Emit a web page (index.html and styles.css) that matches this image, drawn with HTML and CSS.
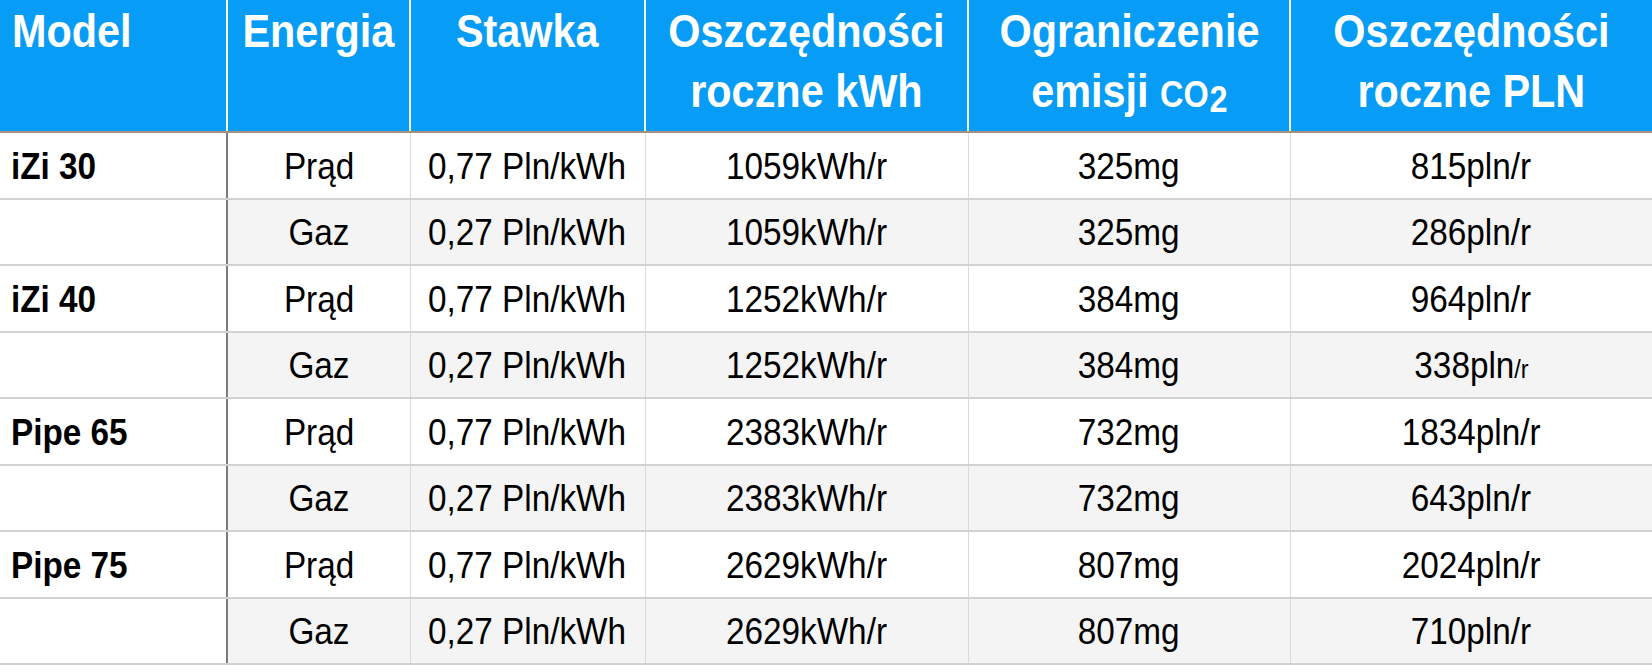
FILE: index.html
```html
<!DOCTYPE html>
<html lang="pl">
<head>
<meta charset="utf-8">
<title>Tabela oszczędności</title>
<link rel="stylesheet" href="styles.css">
</head>
<body>
<table class="grid">
  <colgroup>
    <col class="c1"><col class="c2"><col class="c3"><col class="c4"><col class="c5"><col class="c6">
  </colgroup>
  <thead>
    <tr>
      <th class="left"><span class="t">Model</span></th>
      <th><span class="t">Energia</span></th>
      <th><span class="t">Stawka</span></th>
      <th><span class="t">Oszczędności<br>roczne kWh</span></th>
      <th><span class="t">Ograniczenie<br>emisji <span class="co">CO</span><span class="co sub">2</span></span></th>
      <th><span class="t">Oszczędności<br>roczne PLN</span></th>
    </tr>
  </thead>
  <tbody>
    <tr><td class="model"><span class="t">iZi 30</span></td><td><span class="t">Prąd</span></td><td><span class="t">0,77 Pln/kWh</span></td><td><span class="t">1059kWh/r</span></td><td><span class="t">325mg</span></td><td><span class="t">815pln/r</span></td></tr>
    <tr class="alt"><td class="model"></td><td><span class="t">Gaz</span></td><td><span class="t">0,27 Pln/kWh</span></td><td><span class="t">1059kWh/r</span></td><td><span class="t">325mg</span></td><td><span class="t">286pln/r</span></td></tr>
    <tr><td class="model"><span class="t">iZi 40</span></td><td><span class="t">Prąd</span></td><td><span class="t">0,77 Pln/kWh</span></td><td><span class="t">1252kWh/r</span></td><td><span class="t">384mg</span></td><td><span class="t">964pln/r</span></td></tr>
    <tr class="alt"><td class="model"></td><td><span class="t">Gaz</span></td><td><span class="t">0,27 Pln/kWh</span></td><td><span class="t">1252kWh/r</span></td><td><span class="t">384mg</span></td><td><span class="t">338pln<span class="small">/r</span></span></td></tr>
    <tr><td class="model"><span class="t">Pipe 65</span></td><td><span class="t">Prąd</span></td><td><span class="t">0,77 Pln/kWh</span></td><td><span class="t">2383kWh/r</span></td><td><span class="t">732mg</span></td><td><span class="t">1834pln/r</span></td></tr>
    <tr class="alt"><td class="model"></td><td><span class="t">Gaz</span></td><td><span class="t">0,27 Pln/kWh</span></td><td><span class="t">2383kWh/r</span></td><td><span class="t">732mg</span></td><td><span class="t">643pln/r</span></td></tr>
    <tr><td class="model"><span class="t">Pipe 75</span></td><td><span class="t">Prąd</span></td><td><span class="t">0,77 Pln/kWh</span></td><td><span class="t">2629kWh/r</span></td><td><span class="t">807mg</span></td><td><span class="t">2024pln/r</span></td></tr>
    <tr class="alt"><td class="model"></td><td><span class="t">Gaz</span></td><td><span class="t">0,27 Pln/kWh</span></td><td><span class="t">2629kWh/r</span></td><td><span class="t">807mg</span></td><td><span class="t">710pln/r</span></td></tr>
  </tbody>
</table>
</body>
</html>
```

FILE: styles.css
```css
html, body {
  margin: 0;
  padding: 0;
  background: #ffffff;
}
body {
  width: 1652px;
  height: 672px;
  overflow: hidden;
  font-family: "Liberation Sans", Arial, Helvetica, sans-serif;
  color: #000;
}
.grid {
  width: 1652px;
  border-collapse: collapse;
  table-layout: fixed;
}
.c1 { width: 227px; }
.c2 { width: 183px; }
.c3 { width: 235px; }
.c4 { width: 323px; }
.c5 { width: 322px; }
.c6 { width: 362px; }

.grid th {
  background: #079cf5;
  color: #fff;
  font-weight: bold;
  font-size: 46px;
  line-height: 60px;
  height: 132px;
  padding: 1px 0 0 0;
  vertical-align: top;
  text-align: center;
  border-left: 2px solid #f2faff;
  border-bottom: 2px solid #a8907e;
  box-sizing: border-box;
  white-space: nowrap;
}
.grid th:first-child { border-left: none; }
.grid th.left { text-align: left; padding-left: 12px; }

.t {
  display: inline-block;
  transform: scaleX(0.9);
  transform-origin: center;
}
th.left .t, td.model .t { transform-origin: left center; }

.co { font-size: 36px; }
.co.sub { position: relative; top: 5px; margin-left: 1px; }

.grid td {
  height: 66.5px;
  padding: 3px 0 0 0;
  font-size: 37px;
  text-align: center;
  vertical-align: middle;
  border-left: 1px solid #dadada;
  border-bottom: 2px solid #d2d2d2;
  box-sizing: border-box;
  white-space: nowrap;
}
.grid td:first-child { border-left: none; }
.grid td:nth-child(2) { border-left: 2px solid #7c7c7c; }
.grid td.model {
  text-align: left;
  padding-left: 11px;
  font-weight: bold;
  background: #fff;
}
.grid tr.alt td { background: #f4f4f4; }
.grid tr.alt td.model { background: #fff; }
.grid td .t { transform: scaleX(0.9); }
.small { font-size: 26px; }
```
